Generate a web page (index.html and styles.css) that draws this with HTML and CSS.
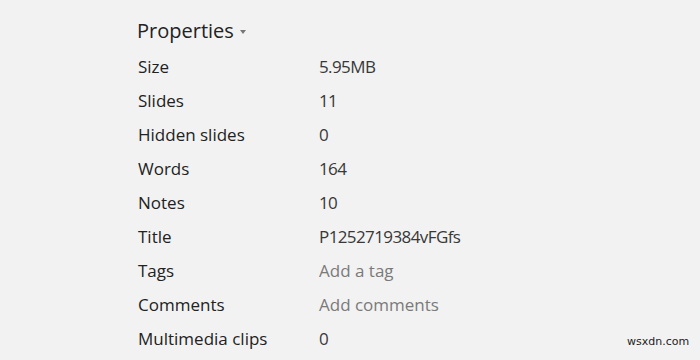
FILE: index.html
```html
<!DOCTYPE html>
<html>
<head>
<meta charset="utf-8">
<link rel="stylesheet" href="styles.css">
</head>
<body>
<div class="panel">
  <div class="heading">Properties <span class="caret"></span></div>
  <div class="props">
    <div class="label">Size</div><div class="value num">5.95MB</div>
    <div class="label">Slides</div><div class="value num">11</div>
    <div class="label">Hidden slides</div><div class="value num">0</div>
    <div class="label">Words</div><div class="value num">164</div>
    <div class="label">Notes</div><div class="value num">10</div>
    <div class="label">Title</div><div class="value num">P1252719384vFGfs</div>
    <div class="label">Tags</div><div class="value placeholder">Add a tag</div>
    <div class="label">Comments</div><div class="value placeholder">Add comments</div>
    <div class="label">Multimedia clips</div><div class="value num">0</div>
  </div>
</div>
<div class="watermark">wsxdn.com</div>
</body>
</html>
```
FILE: styles.css
```css
html, body {
  margin: 0;
  padding: 0;
  width: 700px;
  height: 360px;
  overflow: hidden;
  background: #f2f2f2;
  font-family: "Open Sans", "Noto Sans", sans-serif;
  color: #222;
}
.panel {
  padding: 16px 0 0 137px;
}
.heading {
  font-size: 20px;
  line-height: 30px;
  color: #222;
  display: flex;
  align-items: center;
  gap: 6px;
}
.caret {
  width: 0;
  height: 0;
  border-left: 3.5px solid transparent;
  border-right: 3.5px solid transparent;
  border-top: 4px solid #777;
  margin-top: 2px;
}
.props {
  display: grid;
  grid-template-columns: 181px auto;
  grid-auto-rows: 34px;
  margin-top: 4px;
  font-size: 17px;
  line-height: 34px;
  padding-left: 1px;
}
.label { color: #222; }
.value { color: #383838; }
.num { letter-spacing: -0.6px; }
.placeholder { color: #7a7a7a; }
.watermark {
  position: absolute;
  left: 627px;
  top: 335px;
  font-family: "DejaVu Sans", sans-serif;
  font-size: 11px;
  color: #222;
}
```
